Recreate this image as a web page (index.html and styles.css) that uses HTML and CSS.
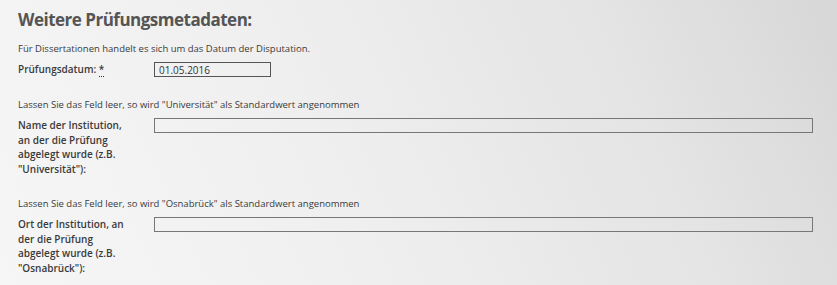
FILE: index.html
```html
<!DOCTYPE html>
<html lang="de">
<head>
<meta charset="utf-8">
<title>Weitere Prüfungsmetadaten</title>
<link rel="stylesheet" href="styles.css">
</head>
<body>
<div class="page">
  <h2 class="title">Weitere Prüfungsmetadaten:</h2>

  <section class="group">
    <p class="hint">Für Dissertationen handelt es sich um das Datum der Disputation.</p>
    <div class="row">
      <label class="label">Prüfungsdatum: <abbr class="req" title="Pflichtfeld">*</abbr></label>
      <input class="field field-date" type="text" value="01.05.2016">
    </div>
  </section>

  <section class="group">
    <p class="hint">Lassen Sie das Feld leer, so wird "Universität" als Standardwert angenommen</p>
    <div class="row">
      <label class="label">Name der Institution, an der die Prüfung abgelegt wurde (z.B. "Universität"):</label>
      <input class="field field-wide" type="text" value="">
    </div>
  </section>

  <section class="group">
    <p class="hint">Lassen Sie das Feld leer, so wird "Osnabrück" als Standardwert angenommen</p>
    <div class="row">
      <label class="label">Ort der Institution, an der die Prüfung abgelegt wurde (z.B. "Osnabrück"):</label>
      <input class="field field-wide" type="text" value="">
    </div>
  </section>
</div>
</body>
</html>
```

FILE: styles.css
```css
html, body {
  margin: 0;
  padding: 0;
  height: 100%;
}
body {
  background: linear-gradient(65deg, #f6f6f6 0%, #efefef 40%, #e4e4e4 75%, #d7d7d7 100%);
  font-family: "Open Sans", "Liberation Sans", sans-serif;
  color: #3a3a3a;
}
.page {
  padding: 9px 24px 0 18px;
}
.title {
  margin: 0 0 11px 0;
  font-size: 17px;
  line-height: 22px;
  font-weight: 700;
  color: #555;
  letter-spacing: -0.5px;
}
.group {
  margin-bottom: 21px;
}
.hint {
  margin: 0 0 6px 0;
  font-size: 9.5px;
  line-height: 14px;
}
.row {
  display: flex;
  align-items: flex-start;
}
.label {
  width: 136px;
  flex: none;
  font-size: 10px;
  line-height: 14.5px;
  font-weight: 600;
  color: #3a3a3a;
  padding-right: 25px;
  box-sizing: border-box;
}
.req {
  text-decoration: none;
  border-bottom: 1px dotted #333;
}
.field {
  box-sizing: border-box;
  height: 15px;
  margin: 0;
  padding: 0 4px;
  border: 1px solid #666;
  background: transparent;
  font-family: inherit;
  font-size: 10px;
  color: #333;
  outline: none;
}
.field-date {
  width: 117px;
  border-color: #555;
}
.field-wide {
  flex: 1;
  border-color: #777;
}
```
